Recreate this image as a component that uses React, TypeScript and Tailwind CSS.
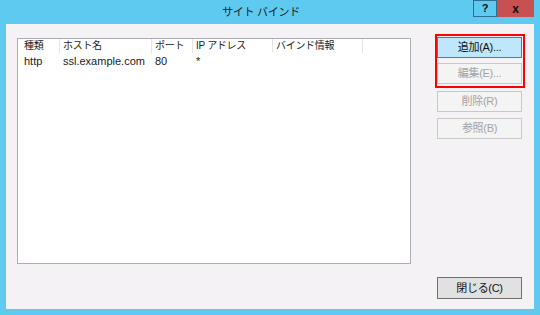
import React from "react";

const font = "font-['Liberation_Sans','Noto_Sans_CJK_JP',sans-serif]";

function Btn({ label, variant }: { label: string; variant: "focus" | "disabled" | "normal" }) {
  const cls =
    variant === "focus"
      ? "bg-[#bee6fd] border-[#3c7fb1] text-[#111]"
      : variant === "disabled"
      ? "bg-[#f4f4f4] border-[#c8c8c8] text-[#a3a3a3]"
      : "bg-[#e1e1e1] border-[#adadad] text-[#111]";
  return (
    <div className={`h-[21px] w-[85px] border flex items-center justify-center text-[11px] tracking-[-0.3px] ${cls}`}>
      {label}
    </div>
  );
}

export default function App() {
  const headers = ["種類", "ホスト名", "ポート", "IP アドレス", "バインド情報"];
  const row = ["http", "ssl.example.com", "80", "*", ""];
  return (
    <div className={`w-[540px] h-[315px] bg-[#5fcaf0] flex flex-col ${font}`}>
      <div className="h-[24px] relative flex items-center">
        <div className="w-[522px] text-center text-[11px] tracking-[-0.3px] text-[#1a1a1a]">サイト バインド</div>
        <div className="absolute top-0 right-[6px] flex">
          <div className="w-[24px] h-[17px] border border-[#2f6f92] flex items-center justify-center text-[11px] font-bold text-[#111]">?</div>
          <div className="w-[37px] h-[17px] bg-[#c75050] flex items-center justify-center text-[12px] font-bold text-[#111]">x</div>
        </div>
      </div>
      <div className="mx-[6px] mb-[6px] flex-1 bg-[#f5f2f6] flex">
        <div className="ml-[11px] mt-[14px] w-[394px] h-[226px] bg-white border border-[#adadb3] text-[11px] text-[#1a1a1a]">
          <div className="grid grid-cols-[42px_92px_41px_80px_90px] h-[14px] leading-[14px] text-[10px] tracking-[-0.3px]">
            {headers.map((h, i) => (
              <div key={i} className={`border-r border-[#e3e3e3] ${i === 0 ? "pl-[6px]" : "pl-[3px]"} whitespace-nowrap`}>
                {h}
              </div>
            ))}
          </div>
          <div className="grid grid-cols-[42px_92px_41px_80px_90px] h-[17px] leading-[17px]">
            {row.map((c, i) => (
              <div key={i} className={`${i === 0 ? "pl-[6px]" : "pl-[3px]"} whitespace-nowrap`}>
                {c}
              </div>
            ))}
          </div>
        </div>
        <div className="ml-[24px] mt-[10px] mb-[10px] flex flex-col">
          <div className="border-2 border-[#ff0000] pt-px pb-[2px] pr-px flex flex-col gap-[5px] w-[90px]">
            <Btn label="追加(A)..." variant="focus" />
            <Btn label="編集(E)..." variant="disabled" />
          </div>
          <div className="mt-[3px] ml-[2px] flex flex-col gap-[6px]">
            <Btn label="削除(R)" variant="disabled" />
            <Btn label="参照(B)" variant="disabled" />
          </div>
          <div className="mt-auto ml-[2px]">
            <div className="h-[22px] w-[85px] border border-[#707070] bg-[#e1e1e1] flex items-center justify-center text-[11px] tracking-[-0.3px] text-[#111]">
              閉じる(C)
            </div>
          </div>
        </div>
      </div>
    </div>
  );
}
